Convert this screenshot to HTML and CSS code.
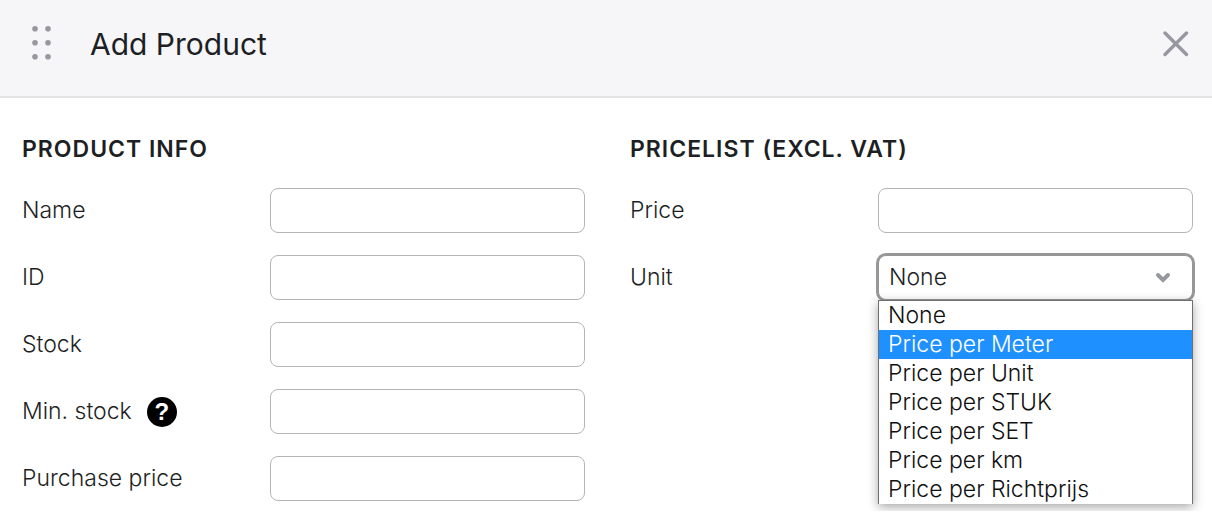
FILE: index.html
```
<!DOCTYPE html>
<html lang="en">
<head>
  <meta charset="UTF-8" />
  <meta name="viewport" content="width=device-width, initial-scale=1" />
  <title>Add Product</title>
  <link rel="stylesheet" href="styles.css">
</head>
<body>
  <div class="dialog">
    <header class="dialog-header">
      <svg class="drag-handle" viewBox="0 0 20 36" fill="#97979f" aria-hidden="true">
        <circle cx="4" cy="2.8" r="2.8" />
        <circle cx="17" cy="2.8" r="2.8" />
        <circle cx="4" cy="16.8" r="2.8" />
        <circle cx="17" cy="16.8" r="2.8" />
        <circle cx="4" cy="30.8" r="2.8" />
        <circle cx="17" cy="30.8" r="2.8" />
      </svg>
      <h1 class="title">Add Product</h1>
      <button type="button" class="close" aria-label="Close">
        <svg viewBox="0 0 26 26" fill="none" stroke="#97979f" stroke-width="3.4" stroke-linecap="round">
          <path d="M2 2L23.5 23.5M23.5 2L2 23.5" />
        </svg>
      </button>
    </header>

    <form class="columns">
      <section class="column">
        <h2 class="section-title">PRODUCT INFO</h2>
        <div class="row">
          <label for="name">Name</label>
          <input type="text" id="name" class="field">
        </div>
        <div class="row">
          <label for="productId">ID</label>
          <input type="text" id="productId" class="field">
        </div>
        <div class="row">
          <label for="stock">Stock</label>
          <input type="text" id="stock" class="field">
        </div>
        <div class="row">
          <div class="label-group">
            <label for="minStock">Min. stock</label>
            <button type="button" class="help" aria-label="Help">?</button>
          </div>
          <input type="text" id="minStock" class="field">
        </div>
        <div class="row">
          <label for="purchasePrice">Purchase price</label>
          <input type="text" id="purchasePrice" class="field">
        </div>
      </section>

      <section class="column">
        <h2 class="section-title">PRICELIST (EXCL. VAT)</h2>
        <div class="row">
          <label for="price">Price</label>
          <input type="text" id="price" class="field">
        </div>
        <div class="row">
          <label for="unit">Unit</label>
          <div class="select-wrap">
            <select id="unit" class="field select">
              <option>None</option>
            </select>
            <svg class="chevron" viewBox="0 0 16 12" fill="none" stroke="#97979f" stroke-width="4" stroke-linecap="round" aria-hidden="true">
              <path d="M3 3L8 8L13 3" />
            </svg>
            <ul class="options" role="listbox" aria-label="Unit">
              <li role="option">None</li>
              <li role="option" class="active" aria-selected="true">Price per Meter</li>
              <li role="option">Price per Unit</li>
              <li role="option">Price per STUK</li>
              <li role="option">Price per SET</li>
              <li role="option">Price per km</li>
              <li role="option">Price per Richtprijs</li>
            </ul>
          </div>
        </div>
      </section>
    </form>
  </div>
</body>
</html>
```

FILE: styles.css
```
* {
  margin: 0;
  padding: 0;
  box-sizing: border-box;
}

body {
  background: #fff;
  color: #1d1f24;
  font-family: Inter, "Liberation Sans", sans-serif;
  font-size: 23px;
  font-weight: 300;
  line-height: 29px;
}

/* header */
.dialog-header {
  display: flex;
  align-items: center;
  padding: 20px 23px 28px 31px;
  background: #f6f6f9;
  border-bottom: 2px solid #e4e4e4;
}

.drag-handle {
  width: 20px;
  height: 36px;
  margin-right: 39px;
}

.title {
  flex: 1;
  font-size: 30px;
  font-weight: 400;
  line-height: 48px;
}

.close {
  width: 26px;
  height: 26px;
  background: none;
  border: none;
  cursor: pointer;
}

.close svg {
  display: block;
}

/* form */
.columns {
  display: grid;
  grid-template-columns: 1fr 1fr;
  gap: 45px;
  padding: 35px 19px 10px 22px;
}

.column {
  display: flex;
  flex-direction: column;
  gap: 22px;
}

.section-title {
  font-size: 23px;
  font-weight: 600;
  line-height: 33px;
  letter-spacing: 1px;
}

.row {
  display: grid;
  grid-template-columns: 248px 1fr;
  align-items: center;
}

.label-group {
  display: flex;
  align-items: center;
  gap: 15px;
}

.help {
  width: 30px;
  height: 30px;
  background: #000;
  border: none;
  border-radius: 50%;
  color: #fff;
  font-family: "Liberation Sans", sans-serif;
  font-size: 24px;
  font-weight: 700;
  line-height: 28px;
  cursor: pointer;
}

.field {
  width: 100%;
  height: 45px;
  padding: 0 10px;
  background: #fff;
  border: 1px solid #b5b5b5;
  border-radius: 8px;
  color: inherit;
  font: inherit;
}

.select-wrap {
  position: relative;
}

.select {
  display: block;
  appearance: none;
  border-color: #979797;
  box-shadow: 0 0 0 2px #979797;
  outline: none;
}

.chevron {
  position: absolute;
  top: 17px;
  right: 22px;
  width: 16px;
  height: 12px;
  pointer-events: none;
}

.options {
  position: absolute;
  top: 100%;
  left: 0;
  right: 0;
  background: #fff;
  border: 1px solid #6f6f6f;
  border-bottom: none;
  box-shadow: 0 3px 10px rgba(0, 0, 0, 0.35);
  color: #101010;
  list-style: none;
}

.options li {
  padding: 0 9px;
}

.options .active {
  background: #1e90ff;
  color: #fff;
}
```
